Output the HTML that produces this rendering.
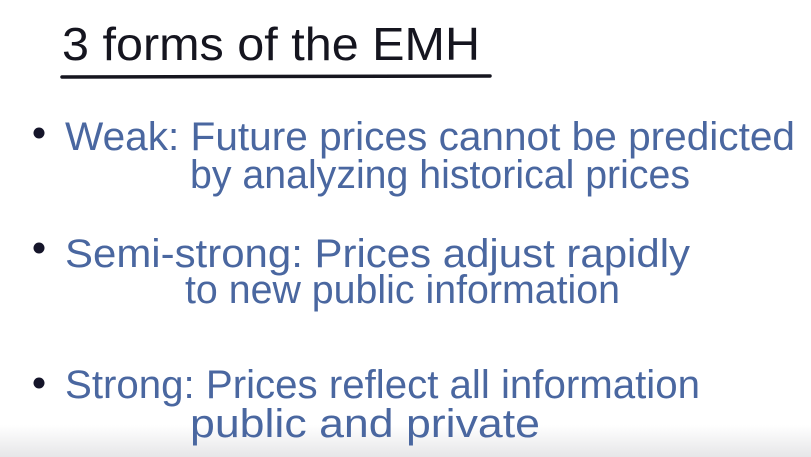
<!DOCTYPE html>
<html><head><meta charset="utf-8"><style>
html,body{margin:0;padding:0;background:#fff;}
svg{display:block}
</style></head><body>
<svg width="811" height="457" viewBox="0 0 811 457" xmlns="http://www.w3.org/2000/svg">
<defs><linearGradient id="g" x1="0" y1="0" x2="0" y2="1"><stop offset="0" stop-color="#fff"/><stop offset="1" stop-color="#e6e6e8"/></linearGradient></defs>
<rect width="811" height="457" fill="#fff"/>
<rect y="425" width="811" height="32" fill="url(#g)"/>
<g font-family="Liberation Sans, sans-serif">
<text x="62" y="60" font-size="46" fill="#15151f" textLength="418" lengthAdjust="spacingAndGlyphs">3 forms of the EMH</text>
<line x1="62" y1="77" x2="490" y2="76" stroke="#15151f" stroke-width="3.5" stroke-linecap="round"/>
<g fill="#15152a"><circle cx="39" cy="133" r="5.5"/><circle cx="39" cy="248" r="5.5"/><circle cx="39" cy="383" r="5.5"/></g>
<g fill="#4a67a0" font-size="40">
<text x="65" y="150" textLength="730" lengthAdjust="spacingAndGlyphs">Weak: Future prices cannot be predicted</text>
<text x="190" y="188" textLength="500" lengthAdjust="spacingAndGlyphs">by analyzing historical prices</text>
<text x="65" y="267" textLength="625" lengthAdjust="spacingAndGlyphs">Semi-strong: Prices adjust rapidly</text>
<text x="185" y="303" textLength="435" lengthAdjust="spacingAndGlyphs">to new public information</text>
<text x="65" y="398" textLength="635" lengthAdjust="spacingAndGlyphs">Strong: Prices reflect all information</text>
<text x="190" y="437" textLength="350" lengthAdjust="spacingAndGlyphs">public and private</text>
</g></g>
</svg>
</body></html>
